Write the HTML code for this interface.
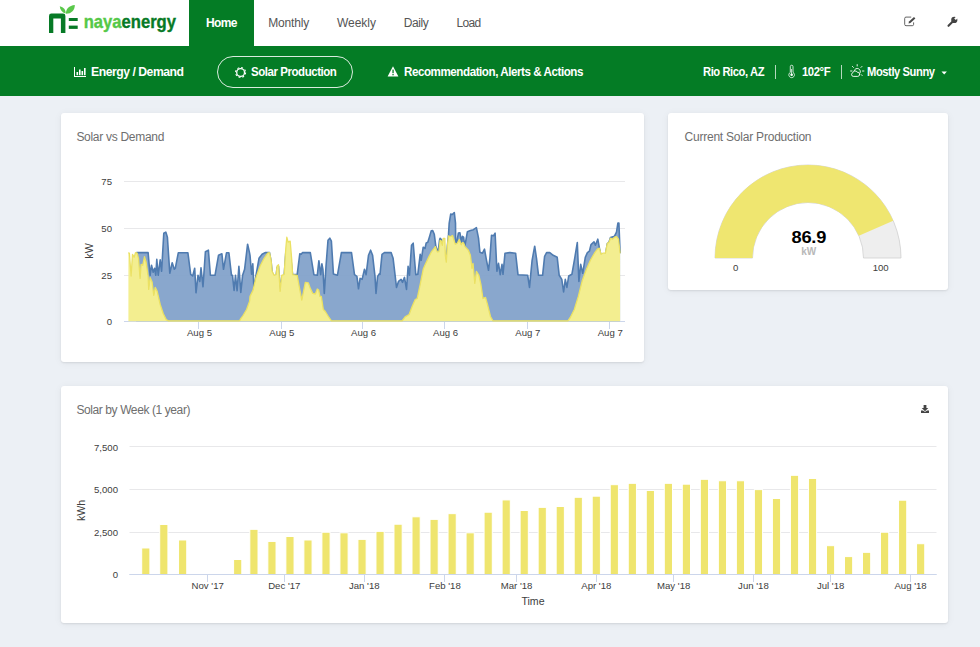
<!DOCTYPE html>
<html><head><meta charset="utf-8"><title>nayaenergy</title>
<style>
*{margin:0;padding:0;box-sizing:border-box}
html,body{width:980px;height:647px;overflow:hidden}
body{background:#ecf0f5;font-family:"Liberation Sans",sans-serif;position:relative}
.abs{position:absolute;white-space:nowrap}
#top{left:0;top:0;width:980px;height:46px;background:#fff}
#sub{left:0;top:46px;width:980px;height:50px;background:#047c25}
.nav{top:16px;font-size:12px;line-height:15px;color:#555}
#home{left:189px;top:0;width:65px;height:46px;background:#047c25}
.sb{top:64.4px;font-size:13px;line-height:15px;color:#fff;font-weight:bold;letter-spacing:-0.5px;transform-origin:left center}
.card{background:#fff;border-radius:3px;box-shadow:0 1px 2px rgba(0,0,0,.09),0 1px 9px rgba(0,0,0,.05)}
.ttl{font-size:12px;line-height:14px;color:#6e6e6e}
svg text{font-family:"Liberation Sans",sans-serif;font-size:9.6px;fill:#404040}
</style></head><body>
<div class="abs" id="top"></div>
<div class="abs" id="sub"></div>
<div class="abs" id="home"></div>

<!-- logo -->
<svg class="abs" style="left:0;top:0" width="190" height="46" viewBox="0 0 190 46">
 <path d="M49 32.9V16a2.4 2.4 0 0 1 2.4-2.4h11.6a2.4 2.4 0 0 1 2.4 2.4v16.9h-4.5V18.4h-7.6v14.5z" fill="#077a26"/>
 <rect x="68.8" y="18" width="8.9" height="3" fill="#077a26"/>
 <rect x="68.8" y="25.6" width="8.9" height="3.3" fill="#077a26"/>
 <path d="M65.6 13.6C62 12.6 60 9.6 59.8 6.2C63.6 7 65.9 9.8 65.6 13.6Z" fill="#5ac84b"/>
 <path d="M66 13.8C65.6 9.2 69.2 5.4 74.8 5C75 10 71.4 13.8 66 13.8Z" fill="#5ac84b"/>
 <text transform="translate(83.7,28.4) scale(.903,1)" style="font-size:18.4px;font-weight:bold;fill:#55c847;stroke:#55c847;stroke-width:.35px">naya<tspan style="fill:#077a26;stroke:#077a26">energy</tspan></text>
</svg>

<div class="abs nav" style="left:206px;color:#fff;font-weight:bold;letter-spacing:-0.65px">Home</div>
<div class="abs nav" style="left:268.2px;letter-spacing:-0.14px">Monthly</div>
<div class="abs nav" style="left:337px;letter-spacing:-0.03px">Weekly</div>
<div class="abs nav" style="left:403.7px;letter-spacing:-0.42px">Daily</div>
<div class="abs nav" style="left:456.6px;letter-spacing:-0.73px">Load</div>

<!-- top-right icons -->
<svg class="abs" style="left:900px;top:12px" width="70" height="22" viewBox="900 12 70 22">
 <path d="M913.6 22.4v2a1.3 1.3 0 0 1-1.3 1.3h-6.3a1.3 1.3 0 0 1-1.3-1.3v-6a1.3 1.3 0 0 1 1.3-1.3h5.2" fill="none" stroke="#555" stroke-width=".9"/>
 <path d="M908.5 23.4l.5-1.9 5-4.6 1.4 1.5-5 4.6z" fill="#4a4a4a"/>
 <path d="M948.5 25.8L953.3 21" stroke="#444" stroke-width="2.1" stroke-linecap="round" fill="none"/>
 <circle cx="954.3" cy="19.9" r="3.1" fill="#444"/><path d="M955 19.2L959 15.2" stroke="#fff" stroke-width="2.3" fill="none"/>
</svg>

<!-- sub bar -->
<svg class="abs" style="left:0;top:46px" width="980" height="50" viewBox="0 46 980 50">
 <rect x="217.5" y="56.5" width="135" height="31" rx="15.5" fill="none" stroke="#fff" stroke-opacity=".85" stroke-width="1"/>
 <!-- bar chart icon -->
 <g fill="#fff"><rect x="74" y="67" width="1" height="10"/><rect x="74" y="76" width="12" height="1"/><rect x="76.5" y="72" width="1.6" height="3.2"/><rect x="79" y="69.5" width="1.6" height="5.7"/><rect x="81.5" y="71" width="1.6" height="4.2"/><rect x="84" y="68" width="1.6" height="7.2"/></g>
 <!-- sun-o icon -->
 <g stroke="#fff" fill="none"><circle cx="240.6" cy="72.5" r="3.9" stroke-width="1.3"/><circle cx="240.6" cy="72.5" r="5" stroke-width="1.1" stroke-dasharray="1.9 2.027"/></g>
 <!-- warning -->
 <path d="M393 66.3l5.4 10.2h-10.8z" fill="#fff"/><rect x="392.4" y="69.6" width="1.3" height="3.6" fill="#047c25"/><rect x="392.4" y="74" width="1.3" height="1.3" fill="#047c25"/>
 <!-- separators -->
 <rect x="775" y="65" width="1" height="14" fill="#fff" fill-opacity=".7"/>
 <rect x="841" y="65" width="1" height="14" fill="#fff" fill-opacity=".7"/>
 <!-- thermometer -->
 <g><path d="M790.3 72.4V66.6a1.35 1.35 0 0 1 2.7 0v5.8a2.8 2.8 0 1 1-2.7 0z" fill="none" stroke="#fff" stroke-width=".8"/><circle cx="791.65" cy="74.7" r="1.3" fill="#fff"/><rect x="791.3" y="69" width=".7" height="5" fill="#fff"/></g>
 <!-- sun/cloud icon -->
 <g stroke="#fff" fill="none" stroke-width=".9"><path d="M854.2 70.9a3.1 3.1 0 1 1 5.6 2.4"/><path d="M857.2 64.6v1.4M852.4 66.4l1 1M862 66.4l-1 1M850.6 71h1.4M862.5 71h1.4M861.2 74.6l1 1" stroke-linecap="round"/><path d="M853.2 76.4a1.9 1.9 0 0 1-.3-3.7a2.3 2.3 0 0 1 4.3-.5a2.1 2.1 0 0 1 .6 4.2z" stroke-width=".9"/></g>
 <path d="M941.5 71.5h5.4l-2.7 3z" fill="#fff"/>
</svg>
<div class="abs sb" style="left:90.5px;transform:scaleX(.9375)">Energy / Demand</div>
<div class="abs sb" style="left:250.9px;transform:scaleX(.883)">Solar Production</div>
<div class="abs sb" style="left:403.8px;transform:scaleX(.893)">Recommendation, Alerts &amp; Actions</div>
<div class="abs sb" style="left:702.5px;transform:scaleX(.8626)">Rio Rico, AZ</div>
<div class="abs sb" style="left:802px;transform:scaleX(.869)">102&deg;F</div>
<div class="abs sb" style="left:867px;transform:scaleX(.861)">Mostly Sunny</div>

<!-- cards -->
<div class="abs card" style="left:61px;top:113px;width:583px;height:249px"></div>
<div class="abs card" style="left:668px;top:113px;width:280px;height:177px"></div>
<div class="abs card" style="left:61px;top:386px;width:887px;height:237px"></div>
<div class="abs ttl" style="left:76.4px;top:130px;letter-spacing:-0.29px">Solar vs Demand</div>
<div class="abs ttl" style="left:684.5px;top:130px;letter-spacing:-0.22px">Current Solar Production</div>
<div class="abs ttl" style="left:76.4px;top:403px;letter-spacing:-0.4px">Solar by Week (1 year)</div>

<svg class="abs" style="left:0;top:96px" width="980" height="551" viewBox="0 96 980 551">
 <!-- chart 1 -->
 <g stroke="#e8e8ea" stroke-width="1"><path d="M124 181.5H625M124 228.5H625M124 275.5H625"/></g>
 <path d="M124 321.5H625" stroke="#ccd6eb" stroke-width="1"/>
 <g stroke="#ccd6eb" stroke-width="1"><path d="M198.5 321.5v7.5 M281.5 321.5v7.5 M362.5 321.5v7.5 M444.5 321.5v7.5 M527.5 321.5v7.5 M609.5 321.5v7.5"/></g>
 <path d="M136.1 252.8 L137.1 252.6 L148.1 252.6 L150.1 275.3 L151.5 265.3 L153.2 272.3 L154.6 268.3 L155.8 275.3 L156.8 259.3 L158.2 275.3 L160.2 259.9 L161.6 271.3 L163.8 233.2 L165.8 232.1 L167.4 237.2 L169.8 273.3 L172.2 262.7 L174.3 269.3 L175.3 268.3 L178.3 252.8 L187.9 252.8 L190.7 274.3 L192.7 276.0 L194.7 268.3 L196.0 292.8 L198.0 275.3 L199.8 281.4 L201.0 267.9 L203.0 286.8 L205.4 251.8 L208.4 250.2 L210.4 275.3 L215.0 275.3 L218.5 255.3 L221.9 253.8 L223.5 269.3 L226.5 252.8 L228.9 252.8 L231.5 275.3 L232.5 275.3 L234.1 290.4 L235.5 275.3 L237.1 290.8 L238.9 266.3 L240.8 292.4 L242.6 275.3 L244.6 269.3 L247.6 244.2 L249.6 253.2 L250.0 255.3 L251.6 274.3 L252.8 263.9 L254.0 290.4 L256.0 275.3 L259.0 258.3 L262.1 254.3 L265.1 252.6 L269.5 252.6 L271.1 261.3 L272.1 272.3 L274.1 276.4 L276.1 276.0 L277.1 267.3 L278.5 266.3 L280.1 292.4 L281.7 276.4 L284.2 275.3 L285.8 252.6 L290.2 252.6 L292.6 274.7 L297.2 274.3 L299.8 253.8 L301.2 254.3 L302.6 252.6 L310.3 252.6 L313.9 274.7 L317.3 275.3 L318.9 260.7 L320.7 274.7 L321.9 263.9 L322.9 269.3 L324.3 293.4 L326.0 266.3 L328.0 240.2 L329.8 238.2 L331.4 241.2 L333.4 273.9 L337.4 275.3 L341.4 252.6 L351.5 252.6 L354.5 274.7 L356.9 276.4 L358.5 288.8 L360.1 278.4 L362.1 279.4 L364.5 269.3 L366.1 274.7 L368.5 255.3 L370.6 250.2 L372.6 255.3 L375.0 276.4 L376.0 293.4 L377.6 276.4 L379.6 273.5 L380.0 274.3 L382.0 254.3 L384.4 252.6 L391.1 252.6 L393.1 258.3 L395.1 275.3 L396.5 287.4 L398.5 281.4 L401.1 279.4 L402.5 282.4 L404.5 277.4 L406.5 289.4 L408.1 266.3 L409.5 275.3 L411.5 245.2 L413.2 243.2 L414.6 260.3 L415.8 274.7 L417.8 274.3 L420.2 254.3 L421.2 260.3 L423.2 247.2 L424.6 248.2 L425.0 248.5 L426.2 242.9 L427.8 242.3 L429.3 237.4 L431.2 230.9 L432.7 230.6 L434.3 234.3 L435.8 246.0 L437.1 249.7 L438.3 251.0 L439.5 240.5 L440.1 238.3 L441.6 239.8 L442.3 246.0 L443.5 245.4 L445.4 255.9 L446.3 259.6 L447.4 246.0 L448.5 234.9 L449.2 223.1 L450.7 214.1 L452.3 214.5 L454.3 212.5 L455.5 223.1 L455.7 243.5 L456.8 242.3 L458.4 233.0 L459.9 232.7 L461.5 242.9 L462.4 236.4 L463.6 237.1 L464.3 242.9 L465.0 245.4 L467.4 231.7 L470.4 230.5 L473.4 229.7 L476.4 227.7 L478.5 238.2 L479.9 252.2 L482.5 253.2 L484.5 249.2 L486.5 260.3 L488.5 270.3 L489.9 258.3 L491.5 235.2 L493.5 235.8 L495.1 233.2 L496.9 271.3 L498.5 263.3 L500.2 274.7 L502.0 264.3 L503.0 274.3 L505.0 253.2 L509.6 252.6 L510.0 252.6 L515.6 253.2 L518.0 274.7 L527.7 275.3 L529.5 287.4 L532.1 260.3 L534.7 246.2 L536.5 258.3 L538.5 275.3 L542.6 275.3 L544.6 256.3 L546.6 252.6 L549.8 252.6 L553.2 255.3 L557.2 257.3 L559.2 275.3 L561.8 279.4 L563.6 292.0 L565.3 279.4 L566.9 287.4 L568.7 276.0 L571.9 274.3 L574.7 258.3 L577.3 242.6 L578.9 281.4 L580.7 264.3 L582.7 273.3 L585.3 257.3 L587.4 252.6 L589.4 251.2 L591.0 244.6 L594.0 241.8 L595.4 245.2 L597.8 239.2 L599.4 248.2 L601.0 255.3 L605.4 254.7 L607.4 243.4 L608.9 242.6 L610.5 237.4 L614.5 236.2 L616.5 232.1 L617.9 223.1 L618.9 223.1 L620.1 253.2 L620.1 321.3 L136.1 321.3 Z" fill="#7f9fc9" fill-opacity=".92"/>
 <path d="M136.1 252.8 L137.1 252.6 L148.1 252.6 L150.1 275.3 L151.5 265.3 L153.2 272.3 L154.6 268.3 L155.8 275.3 L156.8 259.3 L158.2 275.3 L160.2 259.9 L161.6 271.3 L163.8 233.2 L165.8 232.1 L167.4 237.2 L169.8 273.3 L172.2 262.7 L174.3 269.3 L175.3 268.3 L178.3 252.8 L187.9 252.8 L190.7 274.3 L192.7 276.0 L194.7 268.3 L196.0 292.8 L198.0 275.3 L199.8 281.4 L201.0 267.9 L203.0 286.8 L205.4 251.8 L208.4 250.2 L210.4 275.3 L215.0 275.3 L218.5 255.3 L221.9 253.8 L223.5 269.3 L226.5 252.8 L228.9 252.8 L231.5 275.3 L232.5 275.3 L234.1 290.4 L235.5 275.3 L237.1 290.8 L238.9 266.3 L240.8 292.4 L242.6 275.3 L244.6 269.3 L247.6 244.2 L249.6 253.2 L250.0 255.3 L251.6 274.3 L252.8 263.9 L254.0 290.4 L256.0 275.3 L259.0 258.3 L262.1 254.3 L265.1 252.6 L269.5 252.6 L271.1 261.3 L272.1 272.3 L274.1 276.4 L276.1 276.0 L277.1 267.3 L278.5 266.3 L280.1 292.4 L281.7 276.4 L284.2 275.3 L285.8 252.6 L290.2 252.6 L292.6 274.7 L297.2 274.3 L299.8 253.8 L301.2 254.3 L302.6 252.6 L310.3 252.6 L313.9 274.7 L317.3 275.3 L318.9 260.7 L320.7 274.7 L321.9 263.9 L322.9 269.3 L324.3 293.4 L326.0 266.3 L328.0 240.2 L329.8 238.2 L331.4 241.2 L333.4 273.9 L337.4 275.3 L341.4 252.6 L351.5 252.6 L354.5 274.7 L356.9 276.4 L358.5 288.8 L360.1 278.4 L362.1 279.4 L364.5 269.3 L366.1 274.7 L368.5 255.3 L370.6 250.2 L372.6 255.3 L375.0 276.4 L376.0 293.4 L377.6 276.4 L379.6 273.5 L380.0 274.3 L382.0 254.3 L384.4 252.6 L391.1 252.6 L393.1 258.3 L395.1 275.3 L396.5 287.4 L398.5 281.4 L401.1 279.4 L402.5 282.4 L404.5 277.4 L406.5 289.4 L408.1 266.3 L409.5 275.3 L411.5 245.2 L413.2 243.2 L414.6 260.3 L415.8 274.7 L417.8 274.3 L420.2 254.3 L421.2 260.3 L423.2 247.2 L424.6 248.2 L425.0 248.5 L426.2 242.9 L427.8 242.3 L429.3 237.4 L431.2 230.9 L432.7 230.6 L434.3 234.3 L435.8 246.0 L437.1 249.7 L438.3 251.0 L439.5 240.5 L440.1 238.3 L441.6 239.8 L442.3 246.0 L443.5 245.4 L445.4 255.9 L446.3 259.6 L447.4 246.0 L448.5 234.9 L449.2 223.1 L450.7 214.1 L452.3 214.5 L454.3 212.5 L455.5 223.1 L455.7 243.5 L456.8 242.3 L458.4 233.0 L459.9 232.7 L461.5 242.9 L462.4 236.4 L463.6 237.1 L464.3 242.9 L465.0 245.4 L467.4 231.7 L470.4 230.5 L473.4 229.7 L476.4 227.7 L478.5 238.2 L479.9 252.2 L482.5 253.2 L484.5 249.2 L486.5 260.3 L488.5 270.3 L489.9 258.3 L491.5 235.2 L493.5 235.8 L495.1 233.2 L496.9 271.3 L498.5 263.3 L500.2 274.7 L502.0 264.3 L503.0 274.3 L505.0 253.2 L509.6 252.6 L510.0 252.6 L515.6 253.2 L518.0 274.7 L527.7 275.3 L529.5 287.4 L532.1 260.3 L534.7 246.2 L536.5 258.3 L538.5 275.3 L542.6 275.3 L544.6 256.3 L546.6 252.6 L549.8 252.6 L553.2 255.3 L557.2 257.3 L559.2 275.3 L561.8 279.4 L563.6 292.0 L565.3 279.4 L566.9 287.4 L568.7 276.0 L571.9 274.3 L574.7 258.3 L577.3 242.6 L578.9 281.4 L580.7 264.3 L582.7 273.3 L585.3 257.3 L587.4 252.6 L589.4 251.2 L591.0 244.6 L594.0 241.8 L595.4 245.2 L597.8 239.2 L599.4 248.2 L601.0 255.3 L605.4 254.7 L607.4 243.4 L608.9 242.6 L610.5 237.4 L614.5 236.2 L616.5 232.1 L617.9 223.1 L618.9 223.1 L620.1 253.2" fill="none" stroke="#4f7bb0" stroke-width="1.6" stroke-linejoin="round"/>
 <path d="M128.4 252.6 L129.4 253.2 L131.1 276.0 L132.5 254.3 L134.1 257.3 L135.5 252.6 L137.1 253.2 L138.5 258.3 L140.1 278.4 L141.1 264.3 L142.7 265.3 L144.5 256.7 L146.1 262.3 L148.1 276.0 L148.7 289.4 L150.1 277.4 L152.1 282.0 L153.8 295.4 L155.2 287.4 L157.2 291.4 L160.2 304.5 L163.2 313.5 L166.2 319.6 L168.2 320.8 L239.6 320.8 L240.6 318.9 L243.0 315.5 L246.6 309.5 L249.6 301.1 L250.0 296.4 L253.0 290.4 L256.0 277.4 L260.0 266.3 L264.1 258.3 L267.7 253.2 L269.5 252.6 L271.1 260.3 L272.1 271.3 L274.1 275.3 L276.1 274.7 L277.1 265.9 L278.5 264.7 L280.1 291.4 L281.7 275.3 L284.2 274.3 L285.8 248.2 L286.8 237.2 L288.2 242.2 L290.2 241.2 L291.8 260.3 L292.6 274.7 L297.2 275.3 L299.2 286.4 L301.8 300.1 L305.3 282.4 L308.3 282.8 L310.3 288.4 L312.7 293.4 L315.3 294.0 L317.3 289.0 L318.7 290.0 L319.9 296.4 L321.3 296.4 L323.3 309.5 L325.3 311.5 L328.4 316.5 L331.4 320.8 L402.1 320.8 L405.1 316.9 L409.1 314.5 L412.1 306.5 L415.2 299.5 L417.2 298.5 L420.2 284.4 L423.2 269.3 L425.0 265.0 L428.7 257.1 L431.2 252.2 L435.5 246.6 L436.4 249.7 L437.4 251.9 L438.9 251.6 L440.1 240.5 L441.2 240.8 L442.3 245.4 L443.2 238.3 L444.8 238.3 L445.4 255.9 L446.3 262.1 L447.3 246.6 L448.5 235.8 L449.7 236.7 L451.0 236.4 L452.5 235.5 L453.7 239.2 L455.3 244.2 L457.1 243.5 L459.3 239.5 L461.2 244.8 L462.4 242.6 L463.6 242.9 L465.0 246.6 L468.4 250.2 L470.4 255.3 L472.0 268.3 L473.0 263.3 L474.8 283.4 L476.4 271.3 L478.9 275.3 L480.9 284.4 L482.9 298.5 L485.5 297.4 L487.5 304.5 L490.5 316.5 L492.9 320.8 L567.9 320.8 L570.3 317.5 L574.3 309.5 L578.3 296.4 L582.3 280.4 L586.4 269.3 L590.4 260.3 L594.4 253.2 L597.4 249.2 L599.4 248.2 L601.0 254.3 L602.8 253.2 L605.4 253.2 L607.4 243.2 L608.9 242.6 L610.5 238.2 L612.5 239.2 L614.5 237.2 L616.5 236.6 L618.5 239.2 L620.1 253.2 L620.1 321.3 L128.4 321.3 Z" fill="#f3ee90"/>
 <path d="M128.4 252.6 L129.4 253.2 L131.1 276.0 L132.5 254.3 L134.1 257.3 L135.5 252.6 L137.1 253.2 L138.5 258.3 L140.1 278.4 L141.1 264.3 L142.7 265.3 L144.5 256.7 L146.1 262.3 L148.1 276.0 L148.7 289.4 L150.1 277.4 L152.1 282.0 L153.8 295.4 L155.2 287.4 L157.2 291.4 L160.2 304.5 L163.2 313.5 L166.2 319.6 L168.2 320.8 L239.6 320.8 L240.6 318.9 L243.0 315.5 L246.6 309.5 L249.6 301.1 L250.0 296.4 L253.0 290.4 L256.0 277.4 L260.0 266.3 L264.1 258.3 L267.7 253.2 L269.5 252.6 L271.1 260.3 L272.1 271.3 L274.1 275.3 L276.1 274.7 L277.1 265.9 L278.5 264.7 L280.1 291.4 L281.7 275.3 L284.2 274.3 L285.8 248.2 L286.8 237.2 L288.2 242.2 L290.2 241.2 L291.8 260.3 L292.6 274.7 L297.2 275.3 L299.2 286.4 L301.8 300.1 L305.3 282.4 L308.3 282.8 L310.3 288.4 L312.7 293.4 L315.3 294.0 L317.3 289.0 L318.7 290.0 L319.9 296.4 L321.3 296.4 L323.3 309.5 L325.3 311.5 L328.4 316.5 L331.4 320.8 L402.1 320.8 L405.1 316.9 L409.1 314.5 L412.1 306.5 L415.2 299.5 L417.2 298.5 L420.2 284.4 L423.2 269.3 L425.0 265.0 L428.7 257.1 L431.2 252.2 L435.5 246.6 L436.4 249.7 L437.4 251.9 L438.9 251.6 L440.1 240.5 L441.2 240.8 L442.3 245.4 L443.2 238.3 L444.8 238.3 L445.4 255.9 L446.3 262.1 L447.3 246.6 L448.5 235.8 L449.7 236.7 L451.0 236.4 L452.5 235.5 L453.7 239.2 L455.3 244.2 L457.1 243.5 L459.3 239.5 L461.2 244.8 L462.4 242.6 L463.6 242.9 L465.0 246.6 L468.4 250.2 L470.4 255.3 L472.0 268.3 L473.0 263.3 L474.8 283.4 L476.4 271.3 L478.9 275.3 L480.9 284.4 L482.9 298.5 L485.5 297.4 L487.5 304.5 L490.5 316.5 L492.9 320.8 L567.9 320.8 L570.3 317.5 L574.3 309.5 L578.3 296.4 L582.3 280.4 L586.4 269.3 L590.4 260.3 L594.4 253.2 L597.4 249.2 L599.4 248.2 L601.0 254.3 L602.8 253.2 L605.4 253.2 L607.4 243.2 L608.9 242.6 L610.5 238.2 L612.5 239.2 L614.5 237.2 L616.5 236.6 L618.5 239.2 L620.1 253.2" fill="none" stroke="#ebe163" stroke-width="1.3" stroke-linejoin="round"/>
 <g text-anchor="end"><text x="112" y="184.8">75</text><text x="112" y="231.8">50</text><text x="112" y="278.8">25</text><text x="112" y="324.8">0</text></g>
 <text transform="translate(93,251) rotate(-90)" text-anchor="middle" style="font-size:10.6px">kW</text>
 <g text-anchor="middle"><text x="199.5" y="335.8">Aug 5</text><text x="281.8" y="335.8">Aug 5</text><text x="363.6" y="335.8">Aug 6</text><text x="445.6" y="335.8">Aug 6</text><text x="527.8" y="335.8">Aug 7</text><text x="610.2" y="335.8">Aug 7</text></g>

 <!-- gauge -->
 <path d="M715.00 258.00 A93.00 93.00 0 0 1 901.00 258.00 L863.50 258.00 A55.50 55.50 0 0 0 752.50 258.00 Z" fill="#eeeeee" stroke="#cfcfcf" stroke-width=".8"/>
 <path d="M715.00 258.00 A93.00 93.00 0 0 1 893.23 220.80 L858.87 235.80 A55.50 55.50 0 0 0 752.50 258.00 Z" fill="#efe670"/>
 <text transform="translate(808.8,243.4) scale(1.1,1)" text-anchor="middle" style="font-size:16.6px;font-weight:bold;fill:#000;letter-spacing:-0.2px">86.9</text>
 <text x="808.7" y="255" text-anchor="middle" style="font-size:10px;font-weight:bold;fill:#b8b8b8">kW</text>
 <text x="735.6" y="270.7" text-anchor="middle">0</text>
 <text x="880.7" y="270.7" text-anchor="middle">100</text>

 <!-- chart 2 -->
 <g stroke="#e8e8ea" stroke-width="1"><path d="M129.5 446.5H936.5M129.5 489.5H936.5M129.5 532.5H936.5"/></g>
 <path d="M129.5 574.5H936.5" stroke="#ccd6eb" stroke-width="1"/>
 <g stroke="#ccd6eb" stroke-width="1"><path d="M207.5 574.5v7.5 M284.5 574.5v7.5 M364.5 574.5v7.5 M444.5 574.5v7.5 M516.5 574.5v7.5 M596.5 574.5v7.5 M673.5 574.5v7.5 M753.5 574.5v7.5 M830.5 574.5v7.5 M910.5 574.5v7.5"/></g>
 <g fill="#efe56e" stroke="#fff" stroke-width="1"><rect x="141.70" y="547.98" width="8.20" height="26.52"/><rect x="159.72" y="524.47" width="8.20" height="50.03"/><rect x="178.54" y="539.98" width="8.20" height="34.52"/><rect x="233.60" y="559.49" width="8.20" height="15.01"/><rect x="249.82" y="529.33" width="8.20" height="45.17"/><rect x="267.84" y="541.42" width="8.20" height="33.08"/><rect x="285.86" y="536.48" width="8.20" height="38.02"/><rect x="303.88" y="539.98" width="8.20" height="34.52"/><rect x="321.90" y="532.22" width="8.20" height="42.28"/><rect x="339.92" y="532.82" width="8.20" height="41.68"/><rect x="357.94" y="539.38" width="8.20" height="35.12"/><rect x="375.96" y="531.37" width="8.20" height="43.13"/><rect x="393.98" y="524.21" width="8.20" height="50.29"/><rect x="412.00" y="516.80" width="8.20" height="57.70"/><rect x="430.02" y="519.36" width="8.20" height="55.14"/><rect x="448.04" y="513.65" width="8.20" height="60.85"/><rect x="466.06" y="532.82" width="8.20" height="41.68"/><rect x="484.08" y="512.20" width="8.20" height="62.30"/><rect x="502.10" y="499.93" width="8.20" height="74.57"/><rect x="520.12" y="510.50" width="8.20" height="64.00"/><rect x="538.14" y="507.34" width="8.20" height="67.16"/><rect x="556.16" y="506.49" width="8.20" height="68.01"/><rect x="574.18" y="497.29" width="8.20" height="77.21"/><rect x="592.20" y="496.18" width="8.20" height="78.32"/><rect x="610.22" y="484.68" width="8.20" height="89.82"/><rect x="628.24" y="483.32" width="8.20" height="91.18"/><rect x="646.26" y="490.47" width="8.20" height="84.03"/><rect x="664.28" y="483.32" width="8.20" height="91.18"/><rect x="682.30" y="484.17" width="8.20" height="90.33"/><rect x="700.32" y="479.31" width="8.20" height="95.19"/><rect x="718.34" y="480.76" width="8.20" height="93.74"/><rect x="736.36" y="480.76" width="8.20" height="93.74"/><rect x="754.38" y="489.62" width="8.20" height="84.88"/><rect x="772.40" y="498.48" width="8.20" height="76.02"/><rect x="790.42" y="475.31" width="8.20" height="99.19"/><rect x="808.44" y="478.46" width="8.20" height="96.04"/><rect x="826.46" y="545.68" width="8.20" height="28.82"/><rect x="844.48" y="556.59" width="8.20" height="17.91"/><rect x="862.50" y="552.33" width="8.20" height="22.17"/><rect x="880.52" y="532.22" width="8.20" height="42.28"/><rect x="898.54" y="500.19" width="8.20" height="74.31"/><rect x="916.56" y="543.72" width="8.20" height="30.78"/></g>
 <path d="M129.5 574.5H936.5" stroke="#ccd6eb" stroke-width="1"/>
 <g text-anchor="end"><text x="118" y="450.6">7,500</text><text x="118" y="493.1">5,000</text><text x="118" y="535.6">2,500</text><text x="118" y="577.6">0</text></g>
 <text transform="translate(84.8,510.5) rotate(-90)" text-anchor="middle" style="font-size:10.6px">kWh</text>
 <g text-anchor="middle"><text x="207.7" y="589.1">Nov '17</text><text x="284.3" y="589.1">Dec '17</text><text x="364.3" y="589.1">Jan '18</text><text x="444.9" y="589.1">Feb '18</text><text x="516.6" y="589.1">Mar '18</text><text x="596.3" y="589.1">Apr '18</text><text x="673.7" y="589.1">May '18</text><text x="753.4" y="589.1">Jun '18</text><text x="830.6" y="589.1">Jul '18</text><text x="910.6" y="589.1">Aug '18</text></g>
 <text x="533" y="605" text-anchor="middle" style="font-size:10.6px">Time</text>
 <!-- download icon -->
 <g fill="#444"><path d="M923.6 405h2.8v3h1.9l-3.3 3.3-3.3-3.3h1.9z"/><path d="M921 410.6h2l1.7 1.2h.6l1.7-1.2h2v2.4h-8z"/></g>
</svg>
</body></html>
